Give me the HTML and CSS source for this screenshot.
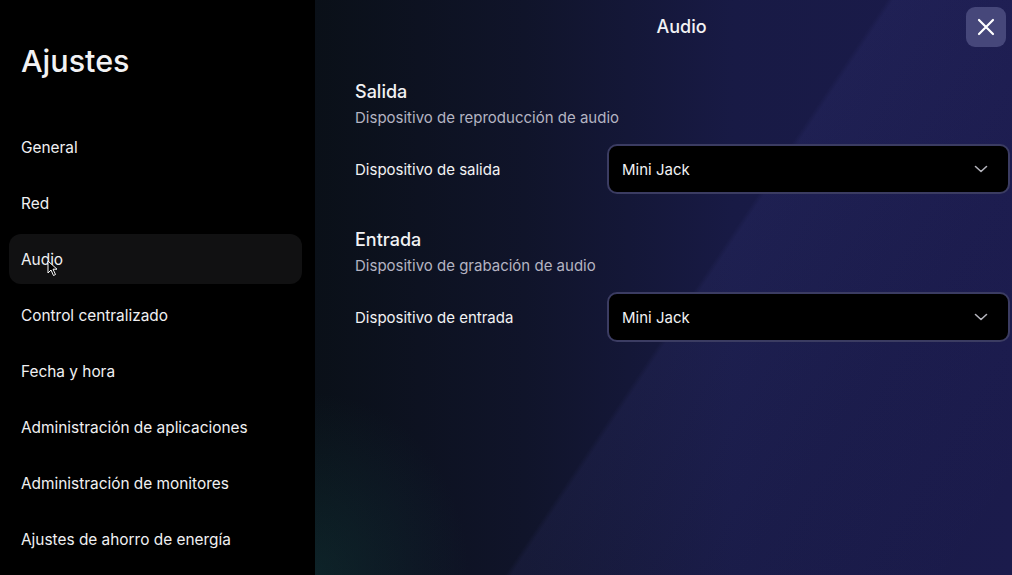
FILE: index.html
```html
<!DOCTYPE html>
<html lang="es">
<head>
<meta charset="utf-8">
<title>Ajustes</title>
<link rel="stylesheet" href="styles.css">
</head>
<body>
<div class="app">
  <aside class="sidebar">
    <h1 class="sidebar-title">Ajustes</h1>
    <nav class="nav">
      <div class="nav-item">General</div>
      <div class="nav-item">Red</div>
      <div class="nav-item active">Audio
        <svg class="cursor" width="12" height="17" viewBox="0 0 12 17"><path d="M1 1 L1 13 L4 10 L6.5 15.5 L8.5 14.5 L6 9.2 L10 9.2 Z" fill="#000" stroke="#fff" stroke-width="1"/></svg>
      </div>
      <div class="nav-item">Control centralizado</div>
      <div class="nav-item">Fecha y hora</div>
      <div class="nav-item">Administración de aplicaciones</div>
      <div class="nav-item">Administración de monitores</div>
      <div class="nav-item">Ajustes de ahorro de energía</div>
    </nav>
  </aside>
  <main class="panel">
    <header class="panel-header">
      <span class="panel-title">Audio</span>
      <button class="close-btn" aria-label="Cerrar">
        <svg width="20" height="20" viewBox="0 0 20 20"><path d="M3 3 L17 17 M17 3 L3 17" stroke="#fff" stroke-width="2.2" stroke-linecap="round"/></svg>
      </button>
    </header>
    <section class="section">
      <h2 class="section-title">Salida</h2>
      <p class="section-sub">Dispositivo de reproducción de audio</p>
      <div class="row">
        <span class="row-label">Dispositivo de salida</span>
        <div class="select">
          <span>Mini Jack</span>
          <svg class="chev" width="14" height="8" viewBox="0 0 14 8"><path d="M1.5 1.5 L7 6.5 L12.5 1.5" fill="none" stroke="#b4b4bc" stroke-width="1.6" stroke-linecap="round" stroke-linejoin="round"/></svg>
        </div>
      </div>
    </section>
    <section class="section">
      <h2 class="section-title">Entrada</h2>
      <p class="section-sub">Dispositivo de grabación de audio</p>
      <div class="row">
        <span class="row-label">Dispositivo de entrada</span>
        <div class="select">
          <span>Mini Jack</span>
          <svg class="chev" width="14" height="8" viewBox="0 0 14 8"><path d="M1.5 1.5 L7 6.5 L12.5 1.5" fill="none" stroke="#b4b4bc" stroke-width="1.6" stroke-linecap="round" stroke-linejoin="round"/></svg>
        </div>
      </div>
    </section>
  </main>
</div>
</body>
</html>
```

FILE: styles.css
```css
* { box-sizing: border-box; }
html, body { margin: 0; padding: 0; height: 100%; }
body {
  font-family: Inter, "Noto Sans", "Liberation Sans", sans-serif;
  color: #f2f2f4;
  background: #000;
  overflow: hidden;
}
.app {
  display: flex;
  width: 1012px;
  height: 575px;
}
.sidebar {
  width: 315px;
  flex: none;
  background: #000;
  padding: 43px 13px 0 9px;
}
.sidebar-title {
  margin: 0 0 43px 12px;
  font-size: 30.5px;
  line-height: 36px;
  font-weight: 500;
  letter-spacing: 0;
}
.nav {
  display: flex;
  flex-direction: column;
  gap: 6px;
}
.nav-item {
  position: relative;
  height: 50px;
  display: flex;
  align-items: center;
  padding-left: 12px;
  font-size: 15.4px;
  border-radius: 12px;
  color: #f0f0f2;
}
.nav-item.active {
  background: #111112;
}
.cursor {
  position: absolute;
  left: 38px;
  top: 26px;
}
.panel {
  flex: 1;
  padding: 0 2px 0 40px;
  background:
    radial-gradient(ellipse 220px 260px at 0% 100%, rgba(20, 70, 70, 0.35), transparent 70%),
    linear-gradient(123.6deg, transparent 53%, rgba(90, 90, 200, 0.09) 53.6%, rgba(90, 90, 200, 0.03) 75%, transparent 95%),
    linear-gradient(90deg, #0a1018 0%, #10142a 30%, #181a45 60%, #1b1b4c 100%);
}
.panel-header {
  height: 53px;
  position: relative;
  display: flex;
  align-items: center;
  justify-content: center;
  margin-left: -40px;
  margin-bottom: 27px;
}
.panel-title {
  font-size: 18px;
  font-weight: 500;
  margin-left: 38px;
}
.close-btn {
  position: absolute;
  right: 4px;
  top: 7px;
  width: 40px;
  height: 40px;
  border: none;
  border-radius: 9px;
  background: #46477a;
  display: flex;
  align-items: center;
  justify-content: center;
  padding: 0;
}
.section {
  margin-bottom: 34px;
}
.section-title {
  margin: 0;
  font-size: 18px;
  line-height: 24px;
  font-weight: 500;
}
.section-sub {
  margin: 4px 0 0;
  font-size: 15px;
  line-height: 20px;
  color: #b4b4c2;
}
.row {
  display: grid;
  grid-template-columns: 252px 1fr;
  align-items: center;
  margin-top: 16px;
}
.row-label {
  font-size: 15px;
}
.select {
  height: 50px;
  border: 2px solid #3b3c62;
  border-radius: 10px;
  background: #000;
  display: flex;
  align-items: center;
  justify-content: space-between;
  padding: 0 20px 0 13px;
  font-size: 15px;
}
```
